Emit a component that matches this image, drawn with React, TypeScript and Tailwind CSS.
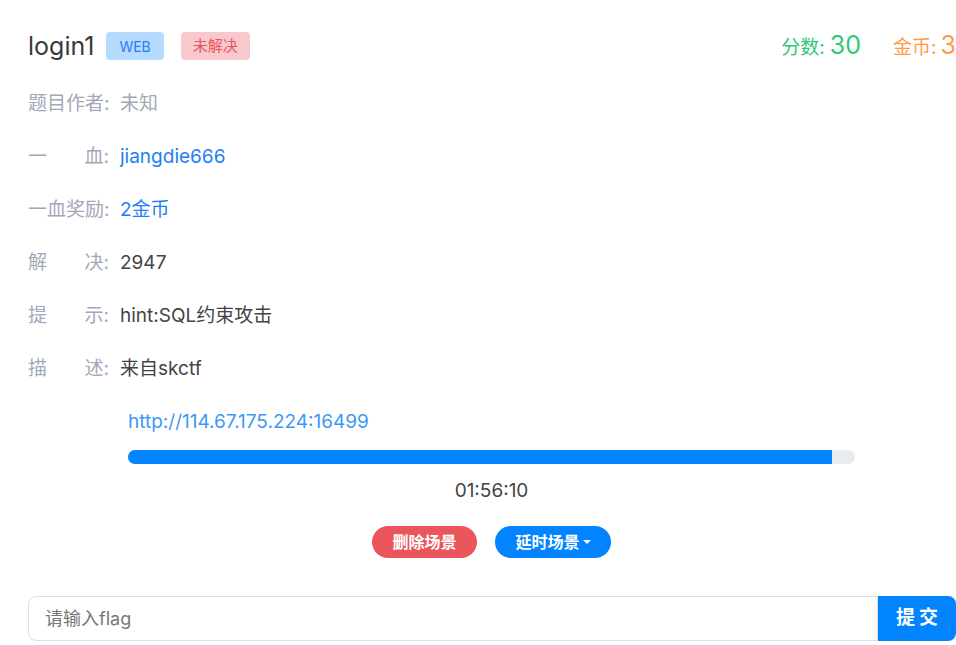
import React from 'react';

const font = { fontFamily: 'Inter, "Noto Sans CJK SC", sans-serif' };

interface InfoRow {
  label: string[];
  value: string;
  tone: 'muted' | 'link' | 'text';
}

const rows: InfoRow[] = [
  { label: ['题目作者:'], value: '未知', tone: 'muted' },
  { label: ['一', '血:'], value: 'jiangdie666', tone: 'link' },
  { label: ['一血奖励:'], value: '2金币', tone: 'link' },
  { label: ['解', '决:'], value: '2947', tone: 'text' },
  { label: ['提', '示:'], value: 'hint:SQL约束攻击', tone: 'text' },
  { label: ['描', '述:'], value: '来自skctf', tone: 'text' },
];

const toneClass = {
  muted: 'text-[#a3a8b8]',
  link: 'text-[#1f7ef7]',
  text: 'text-[#444]',
};

export default function App() {
  const progress = 96.8;

  return (
    <div className="w-[956px] h-[645px] bg-white overflow-hidden" style={font}>
      <div className="pl-[28px] pt-[30px]">
        {/* 标题 */}
        <div className="flex items-center h-[32px]">
          <h1 className="text-[25px] text-[#3a3a3a] leading-none">login1</h1>
          <span className="ml-[12px] h-[28px] px-[13px] flex items-center rounded-[4px] bg-[#b5dbff] text-[#1f7ef7] text-[14px]">
            WEB
          </span>
          <span className="ml-[17px] h-[28px] px-[12px] flex items-center rounded-[4px] bg-[#f8c9cc] text-[#e55560] text-[15px]">
            未解决
          </span>
          <div className="ml-auto flex items-baseline">
            <span className="text-[19px] text-[#33c677]">分数:</span>
            <span className="ml-[5px] text-[25px] text-[#33c677]">30</span>
            <span className="ml-[32px] text-[19px] text-[#ff9a4a]">金币:</span>
            <span className="ml-[4px] text-[25px] text-[#ff9a4a]">3</span>
          </div>
        </div>

        {/* 信息 */}
        <div className="mt-[16px] flex flex-col">
          {rows.map((r) => (
            <div key={r.value} className="h-[53px] flex items-center text-[19px]">
              <div className="w-[81px] shrink-0 flex justify-between whitespace-nowrap text-[#a3a8b8]">
                {r.label.map((l) => (
                  <span key={l}>{l}</span>
                ))}
              </div>
              <span className={`ml-[11px] ${toneClass[r.tone]}`}>{r.value}</span>
            </div>
          ))}
        </div>

        {/* 场景 */}
        <div className="ml-[100px] w-[727px] mt-[13px] flex flex-col">
          <a className="text-[19px] text-[#3d99f5] leading-[26px]">http://114.67.175.224:16499</a>
          <div className="mt-[15px] h-[14px] rounded-full bg-[#e9ecef] overflow-hidden">
            <div className="h-full bg-[#0283ff]" style={{ width: `${progress}%` }} />
          </div>
          <div className="mt-[14px] text-center text-[19px] text-[#444] leading-[26px]">01:56:10</div>
          <div className="mt-[22px] flex justify-center gap-[18px]">
            <button className="h-[32px] w-[105px] rounded-full bg-[#ea565b] text-white text-[16px] font-bold">
              删除场景
            </button>
            <button className="h-[32px] w-[116px] rounded-full bg-[#0283ff] text-white text-[16px] font-bold flex items-center justify-center">
              延时场景
              <span className="ml-[3px] border-x-[4px] border-x-transparent border-t-[4px] border-t-white" />
            </button>
          </div>
        </div>

        {/* 提交 */}
        <div className="mt-[38px] flex h-[45px]">
          <input
            className="flex-1 border border-[#dcdfe3] rounded-l-[8px] px-[16px] text-[18px] text-[#555] placeholder:text-[#777] outline-none"
            placeholder="请输入flag"
            style={font}
          />
          <button className="w-[78px] bg-[#0283ff] rounded-r-[8px] text-white text-[19px] font-bold tracking-[4px] pl-[4px]">
            提交
          </button>
        </div>
      </div>
    </div>
  );
}
